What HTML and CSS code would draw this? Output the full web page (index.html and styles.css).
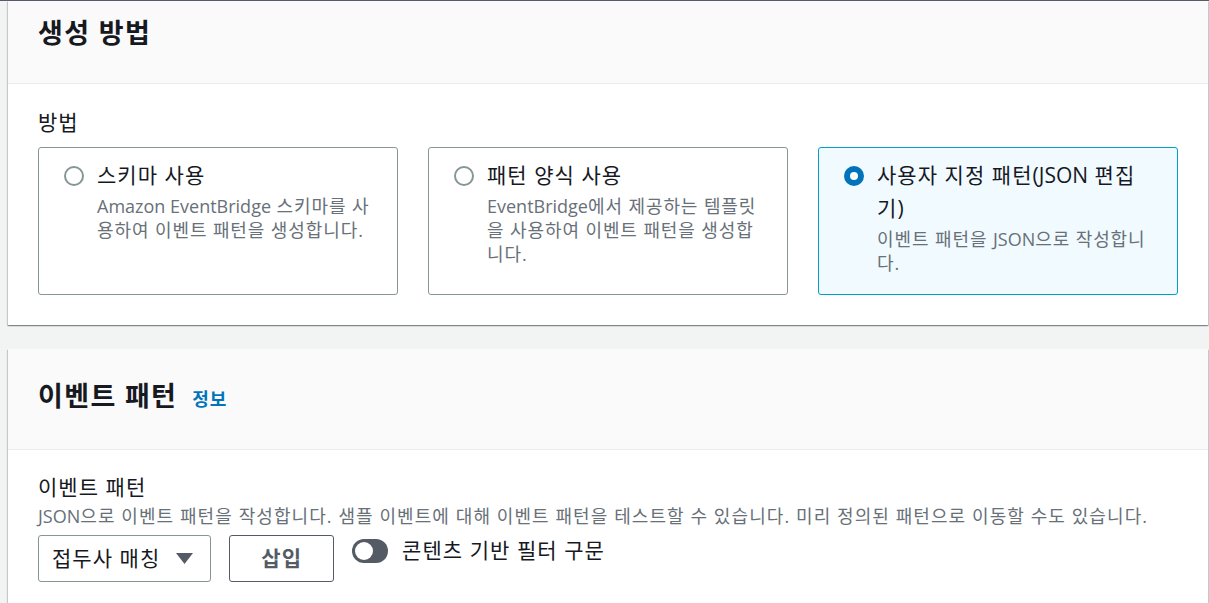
FILE: index.html
```html
<!DOCTYPE html>
<html lang="ko">
<head>
<meta charset="utf-8">
<title>이벤트 패턴</title>
<link rel="stylesheet" href="styles.css">
</head>
<body>
<div class="topline"></div>
<main class="page">
  <section class="container">
    <header class="container-header container-header--first">
      <h2 class="heading">생성 방법</h2>
    </header>
    <div class="container-body">
      <div class="field-label">방법</div>
      <div class="tiles">
        <div class="tile">
          <span class="radio"></span>
          <div class="tile-text">
            <div class="tile-label">스키마 사용</div>
            <div class="tile-desc"><span class="en">Amazon EventBridge</span> 스키마를 사<br>용하여 이벤트 패턴을 생성합니다.</div>
          </div>
        </div>
        <div class="tile">
          <span class="radio"></span>
          <div class="tile-text">
            <div class="tile-label">패턴 양식 사용</div>
            <div class="tile-desc"><span class="en">EventBridge</span>에서 제공하는 템플릿<br>을 사용하여 이벤트 패턴을 생성합<br>니다.</div>
          </div>
        </div>
        <div class="tile tile--selected">
          <span class="radio radio--checked"></span>
          <div class="tile-text">
            <div class="tile-label">사용자 지정 패턴<span class="en">(JSON</span> 편집<br>기<span class="en">)</span></div>
            <div class="tile-desc">이벤트 패턴을 <span class="en">JSON</span>으로 작성합니<br>다.</div>
          </div>
        </div>
      </div>
    </div>
  </section>

  <section class="container container--spaced">
    <header class="container-header">
      <h2 class="heading">이벤트 패턴<a class="info-link" href="#">정보</a></h2>
    </header>
    <div class="container-body container-body--form">
      <div class="field-label">이벤트 패턴</div>
      <div class="field-desc field-desc--wide"><span class="en">JSON</span>으로 이벤트 패턴을 작성합니다. 샘플 이벤트에 대해 이벤트 패턴을 테스트할 수 있습니다. 미리 정의된 패턴으로 이동할 수도 있습니다.</div>
      <div class="controls">
        <div class="select">
          <span class="select-text">접두사 매칭</span>
          <svg class="caret" width="17" height="11" viewBox="0 0 17 11"><polygon points="0,0 17,0 8.5,11" fill="#545b64"/></svg>
        </div>
        <button class="button" type="button">삽입</button>
        <label class="toggle">
          <span class="toggle-track"><span class="toggle-knob"></span></span>
          <span class="toggle-label">콘텐츠 기반 필터 구문</span>
        </label>
      </div>
    </div>
  </section>
</main>
</body>
</html>
```

FILE: styles.css
```css
* {
  box-sizing: border-box;
  letter-spacing: 0.05em;
}

html, body {
  margin: 0;
  padding: 0;
}

body {
  background: #f2f3f3;
  font-family: "Open Sans", "Noto Sans CJK KR", sans-serif;
  color: #16191f;
  font-size: 21px;
  line-height: 33px;
  overflow: hidden;
}

.en {
  letter-spacing: 0;
}

.topline {
  height: 1px;
  background: #545b64;
}

.page {
  padding: 0 1px 0 8px;
}

.container {
  background: #ffffff;
  box-shadow: 0 1px 1px 0 rgba(0, 28, 36, 0.3),
              1px 1px 1px 0 rgba(0, 28, 36, 0.15),
              -1px 1px 1px 0 rgba(0, 28, 36, 0.15);
}

.container--spaced {
  margin-top: 24px;
}

.container-header {
  background: #fafafa;
  border-bottom: 1px solid #eaeded;
  padding: 30px 30px 33px;
}

.container-header--first {
  padding-top: 15px;
  padding-bottom: 34px;
}

.heading {
  margin: 0;
  font-size: 27px;
  line-height: 33px;
  font-weight: 700;
  color: #16191f;
}

.info-link {
  margin-left: 15px;
  font-size: 18px;
  font-weight: 700;
  color: #0073bb;
  text-decoration: none;
}

.container-body {
  padding: 22px 30px 30px;
}

.container-body--form {
  padding-top: 21px;
}

.field-label {
  font-size: 21px;
  line-height: 33px;
  color: #16191f;
}

.field-desc {
  font-size: 18px;
  line-height: 24px;
  color: #687078;
}

.field-desc--wide {
  letter-spacing: 0.06em;
}

.tiles {
  margin-top: 8px;
  display: grid;
  grid-template-columns: repeat(3, 1fr);
  gap: 30px;
}

.tile {
  display: flex;
  align-items: flex-start;
  border: 1px solid #879596;
  border-radius: 3px;
  padding: 11px 20px 19px 25px;
  background: #ffffff;
}

.tile--selected {
  border-color: #00a1c9;
  background: #f1faff;
}

.radio {
  flex: none;
  width: 20px;
  height: 20px;
  margin-top: 7px;
  margin-right: 13px;
  border-radius: 50%;
  border: 2px solid #879596;
  background: #ffffff;
}

.radio--checked {
  border: 6px solid #0073bb;
}

.tile-text {
  flex: 1;
  min-width: 0;
  white-space: nowrap;
}

.tile-label {
  font-size: 21px;
  line-height: 33px;
  color: #16191f;
}

.tile-desc {
  margin-top: 2px;
  font-size: 18px;
  line-height: 24px;
  color: #687078;
}

.controls {
  margin-top: 7px;
  display: flex;
  align-items: flex-start;
  gap: 18px;
}

.select {
  display: flex;
  align-items: center;
  height: 47px;
  padding: 0 17px 0 13px;
  border: 1px solid #879596;
  border-radius: 3px;
  background: #ffffff;
  color: #16191f;
}

.select-text {
  margin-right: 16px;
}

.caret {
  display: block;
}

.button {
  height: 47px;
  padding: 0 31px;
  border: 1px solid #545b64;
  border-radius: 3px;
  background: #ffffff;
  color: #545b64;
  font-family: inherit;
  font-size: 21px;
  font-weight: 700;
  line-height: 33px;
}

.toggle {
  display: flex;
  align-items: center;
  gap: 14px;
  margin-top: -1px;
}

.toggle-track {
  display: flex;
  align-items: center;
  width: 36px;
  height: 24px;
  padding: 0 3px;
  border-radius: 12px;
  background: #545b64;
}

.toggle-knob {
  width: 18px;
  height: 18px;
  border-radius: 50%;
  background: #ffffff;
}

.toggle-label {
  font-size: 21px;
  line-height: 33px;
  color: #16191f;
}
```
